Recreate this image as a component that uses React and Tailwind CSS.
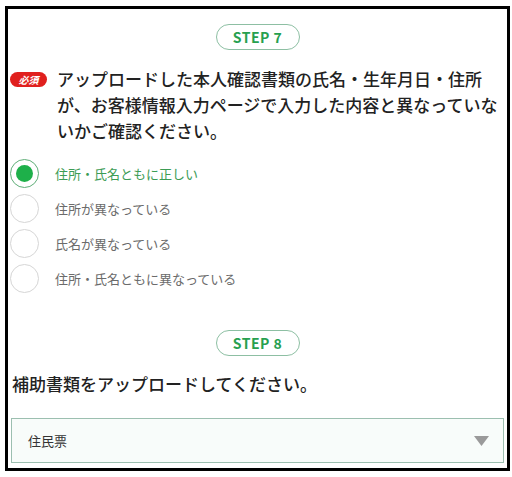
import React from 'react';

const font = { fontFamily: '"Noto Sans CJK JP", "Noto Sans", sans-serif' };

function StepPill({ label }) {
  return (
    <div className="flex justify-center">
      <div className="w-[84px] h-[26px] rounded-full border border-[#8dbfa3] flex items-center justify-center text-[14px] font-bold tracking-[0.5px] text-[#27a04f] leading-none">
        {label}
      </div>
    </div>
  );
}

function Radio({ label, checked }) {
  return (
    <div className="h-[35px] flex items-center">
      {checked ? (
        <div className="w-[29px] h-[29px] rounded-full border-[1.5px] border-[#5fae78] flex items-center justify-center">
          <div className="w-[17px] h-[17px] rounded-full bg-[#1eb04a]" />
        </div>
      ) : (
        <div className="w-[29px] h-[29px] rounded-full border border-[#d6d6d6] bg-white" />
      )}
      <span className={`ml-[16px] text-[13px] ${checked ? 'text-[#3c9c55]' : 'text-[#6b6b6b]'}`}>{label}</span>
    </div>
  );
}

export default function App() {
  const options = [
    { label: '住所・氏名ともに正しい', checked: true },
    { label: '住所が異なっている' },
    { label: '氏名が異なっている' },
    { label: '住所・氏名ともに異なっている' },
  ];

  return (
    <div className="bg-white w-[512px] h-[477px] pt-[6px] pl-[5px]" style={font}>
      <div className="w-[505px] h-[465px] border-[3px] border-black bg-white px-[2px] pt-[15px] flex flex-col">
        <StepPill label="STEP 7" />

        <div className="mt-[16px] flex items-start">
          <div className="mt-[6px] w-[37px] h-[15px] rounded-full bg-[#e0201e] flex items-center justify-center text-white text-[10px] font-bold italic leading-none shrink-0">
            必須
          </div>
          <p className="ml-[10px] text-[17px] leading-[26px] font-medium text-[#222]">
            アップロードした本人確認書類の氏名・生年月日・住所が、お客様情報入力ページで入力した内容と異なっていないかご確認ください。
          </p>
        </div>

        <div className="mt-[12px] flex flex-col">
          {options.map((o) => (
            <Radio key={o.label} label={o.label} checked={o.checked} />
          ))}
        </div>

        <div className="mt-[34px]">
          <StepPill label="STEP 8" />
        </div>

        <p className="mt-[15px] pl-[2px] text-[17px] leading-[26px] font-medium text-[#222]">
          補助書類をアップロードしてください。
        </p>

        <div className="mt-[21px] mx-[1px] h-[45px] border border-[#9cbfb0] bg-[#f8fcfa] flex items-center justify-between pl-[16px] pr-[14px]">
          <span className="text-[13px] text-[#333]">住民票</span>
          <svg width="15" height="10" viewBox="0 0 15 10">
            <path d="M0 0 L15 0 L7.5 10 Z" fill="#9a9a9a" />
          </svg>
        </div>
      </div>
    </div>
  );
}
